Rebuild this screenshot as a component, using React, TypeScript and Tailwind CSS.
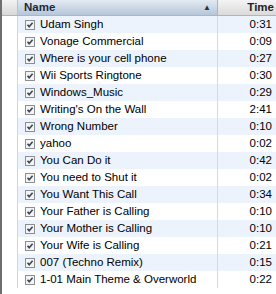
import React from 'react';

const songs: [string, string][] = [
  ['Udam Singh', '0:31'],
  ['Vonage Commercial', '0:09'],
  ['Where is your cell phone', '0:27'],
  ['Wii Sports Ringtone', '0:30'],
  ['Windows_Music', '0:29'],
  ["Writing's On the Wall", '2:41'],
  ['Wrong Number', '0:10'],
  ['yahoo', '0:02'],
  ['You Can Do it', '0:42'],
  ['You need to Shut it', '0:02'],
  ['You Want This Call', '0:34'],
  ['Your Father is Calling', '0:10'],
  ['Your Mother is Calling', '0:10'],
  ['Your Wife is Calling', '0:21'],
  ['007 (Techno Remix)', '0:15'],
  ['1-01 Main Theme & Overworld', '0:22'],
];

const Check = () => (
  <svg width="10" height="10" viewBox="0 0 10 10" className="shrink-0">
    <rect x="0.5" y="0.5" width="9" height="9" fill="#f4f4f4" stroke="#8a8f96" />
    <path d="M2.5 4.8 L4.2 6.8 L7.6 2.8" fill="none" stroke="#3c4652" strokeWidth="1.6" />
  </svg>
);

export default function App() {
  return (
    <div
      className="w-[276px] h-[294px] overflow-hidden bg-white border-l-2 border-[#6e6e6e] text-[11.5px] text-black"
      style={{ fontFamily: '"Liberation Sans", Arial, sans-serif' }}
    >
      <div className="flex h-[16px] border-b border-[#b4b4b4]">
        <div className="w-[16px] bg-gradient-to-b from-[#f2f2f2] to-[#d9d9d9] border-r border-[#c0c0c0]" />
        <div className="w-[200px] flex items-center justify-between pl-[6px] pr-[6px] bg-gradient-to-b from-[#e3eaf3] to-[#b6c6d9] border-r border-[#a9b4c2] font-bold text-[#1e2a3a]">
          <span>Name</span>
          <span className="text-[8px] text-[#2a3340]">▲</span>
        </div>
        <div className="flex-1 flex items-center justify-end pr-[2px] bg-gradient-to-b from-[#f4f4f4] to-[#dadada] font-bold text-[#222]">
          Time
        </div>
      </div>
      {songs.map(([name, time], i) => (
        <div key={name} className={`flex h-[17px] ${i % 2 === 0 ? 'bg-[#edf3fd]' : 'bg-white'}`}>
          <div className="w-[16px] bg-white border-r border-[#d4d4d4]" />
          <div className="w-[200px] flex items-center gap-[5px] pl-[7px] border-r border-[#d9d9d9] whitespace-nowrap overflow-hidden">
            <Check />
            <span>{name}</span>
          </div>
          <div className="flex-1 flex items-center justify-end pr-[4px]">{time}</div>
        </div>
      ))}
    </div>
  );
}
